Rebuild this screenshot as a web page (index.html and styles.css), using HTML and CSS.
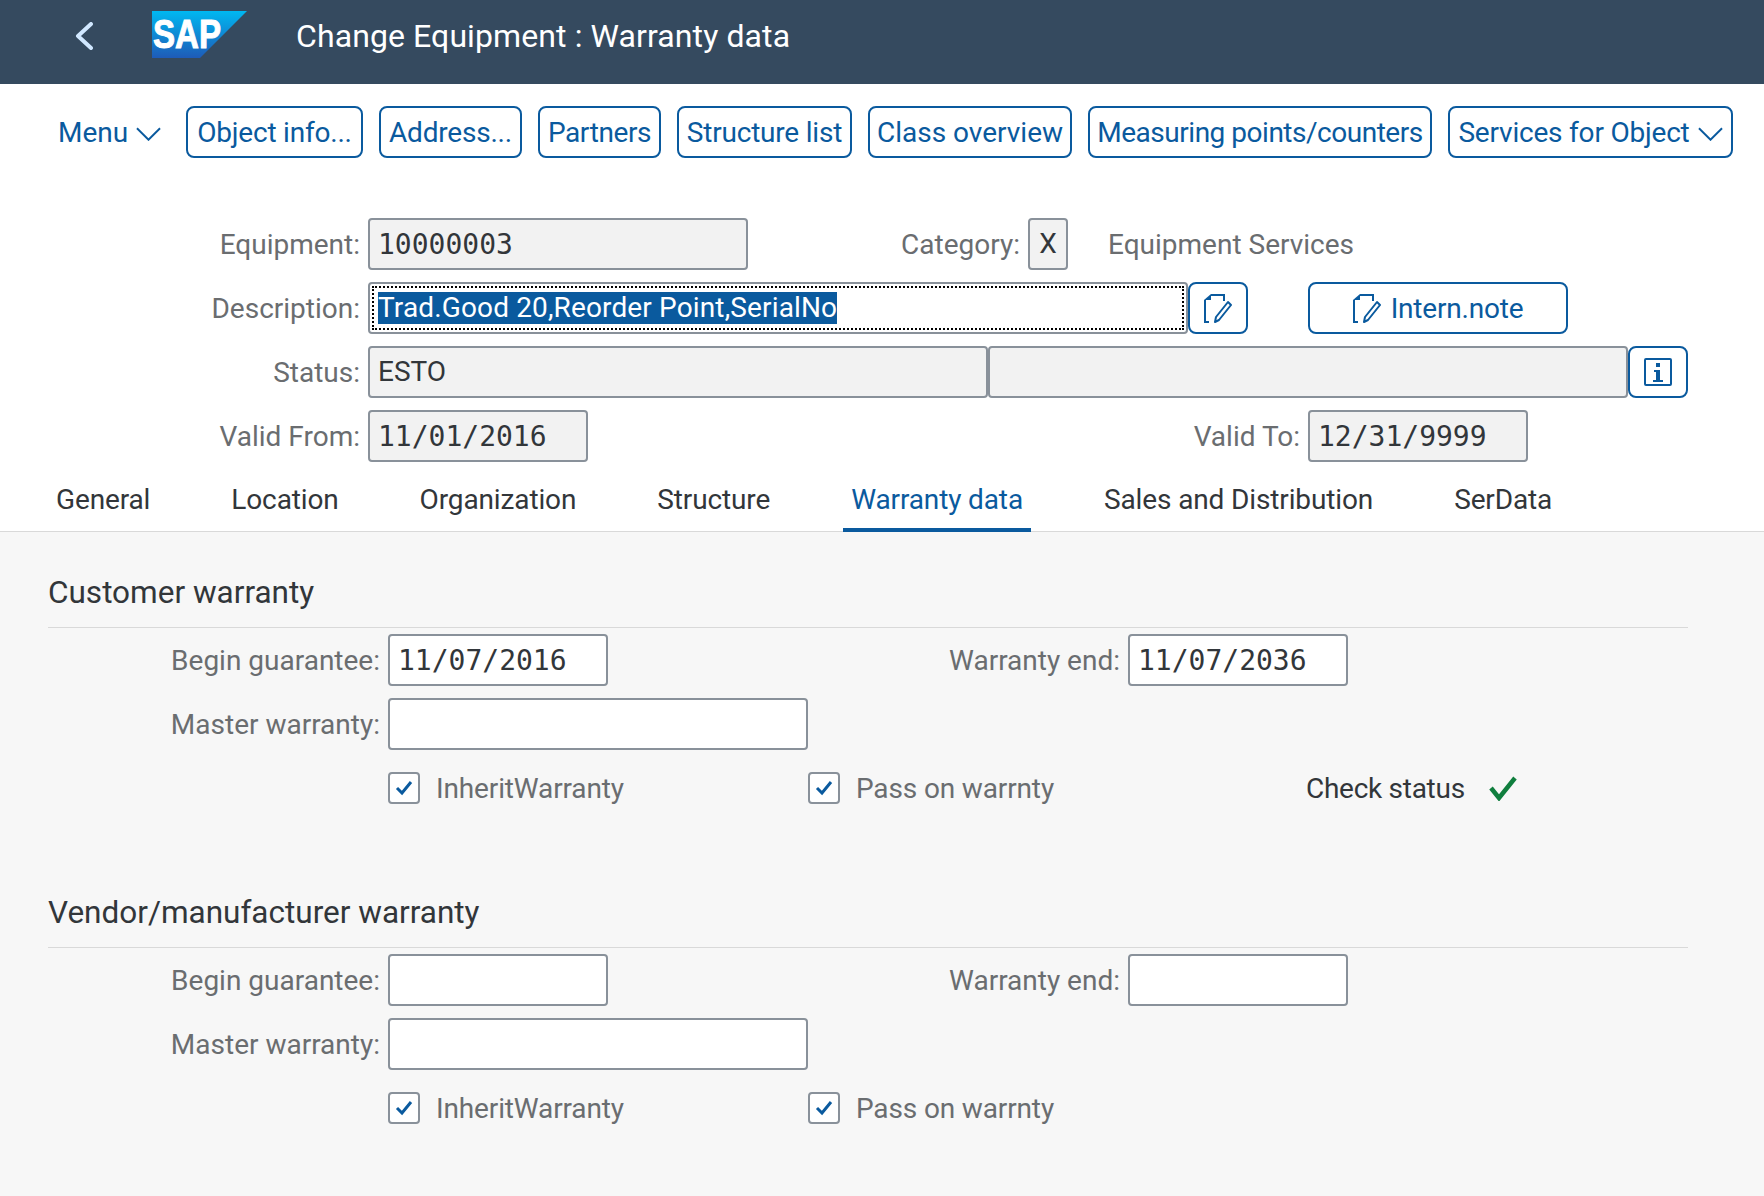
FILE: index.html
```html
<!DOCTYPE html>
<html lang="en">
    <head>
        <meta charset="UTF-8">
        <title>Change Equipment : Warranty data</title>
        <link rel="stylesheet" href="styles.css">
    </head>
    <body>
        <header class="shell">
            <svg class="back" viewBox="0 0 18 28"><path d="M16 2 3 14l13 12" fill="none" stroke="#d1e8ff" stroke-width="4" stroke-linecap="round" stroke-linejoin="round"/></svg>
            <svg class="logo" viewBox="0 0 95 47">
                <defs>
                    <linearGradient id="sapgrad" x1="0" y1="0" x2="0" y2="1">
                        <stop offset="0" stop-color="#00b8f1"/>
                        <stop offset="1" stop-color="#1e5bb8"/>
                    </linearGradient>
                </defs>
                <polygon points="0,0 95,0 48,47 0,47" fill="url(#sapgrad)"/>
                <text x="1" y="37" class="logo-text" textLength="68" lengthAdjust="spacingAndGlyphs">SAP</text>
            </svg>
            <div class="shell-title">Change Equipment : Warranty data</div>
        </header>

        <nav class="toolbar">
            <span class="menu">Menu <svg class="chev" viewBox="0 0 26 14"><path d="M1 1l12 12L25 1" fill="none" stroke="#0a5a9e" stroke-width="2"/></svg></span>
            <button class="btn w-obj">Object info...</button>
            <button class="btn w-addr">Address...</button>
            <button class="btn w-part">Partners</button>
            <button class="btn w-struct">Structure list</button>
            <button class="btn w-class">Class overview</button>
            <button class="btn w-meas">Measuring points/counters</button>
            <button class="btn w-serv">Services for Object <svg class="chev" viewBox="0 0 26 14"><path d="M1 1l12 12L25 1" fill="none" stroke="#0a5a9e" stroke-width="2"/></svg></button>
        </nav>

        <section class="head-form">
            <div class="row">
                <label class="lbl l-main">Equipment:</label>
                <div class="field ro mono f-equip">10000003</div>
                <label class="lbl l-cat">Category:</label>
                <div class="field ro f-x">X</div>
                <span class="lbl-text">Equipment Services</span>
            </div>
            <div class="row">
                <label class="lbl l-main">Description:</label>
                <div class="field focus f-desc"><span class="sel">Trad.Good 20,Reorder Point,SerialNo</span></div>
                <button class="btn icon-btn">
                    <svg class="edit" viewBox="0 0 28 29"><use href="#edit-icon"/></svg>
                </button>
                <button class="btn note-btn">
                    <svg class="edit" viewBox="0 0 28 29">
                        <g id="edit-icon">
                            <path d="M1 6v22h4M7 1h13v6" fill="none" stroke="#0a5a9e" stroke-width="2"/>
                            <path d="M0 6l7-6v6z" fill="#0a5a9e"/>
                            <path d="M12 23 24 8l3 3-12 15-4 2z" fill="none" stroke="#0a5a9e" stroke-width="2" stroke-linejoin="round"/>
                        </g>
                    </svg>
                    Intern.note
                </button>
            </div>
            <div class="row">
                <label class="lbl l-main">Status:</label>
                <div class="field ro f-stat1">ESTO</div>
                <div class="field ro f-stat2"></div>
                <button class="btn icon-btn">
                    <svg class="info" viewBox="0 0 28 28">
                        <rect x="1" y="1" width="26" height="26" rx="1" fill="none" stroke="#0a5a9e" stroke-width="2"/>
                        <rect x="12" y="5" width="4" height="4" fill="#0a5a9e"/>
                        <path d="M10 12h6v10h3v2H9v-2h3v-8h-2z" fill="#0a5a9e"/>
                    </svg>
                </button>
            </div>
            <div class="row">
                <label class="lbl l-main">Valid From:</label>
                <div class="field ro mono f-date">11/01/2016</div>
                <label class="lbl l-to">Valid To:</label>
                <div class="field ro mono f-date">12/31/9999</div>
            </div>
        </section>

        <div class="tabs">
            <a class="tab">General</a>
            <a class="tab">Location</a>
            <a class="tab">Organization</a>
            <a class="tab">Structure</a>
            <a class="tab active">Warranty data</a>
            <a class="tab">Sales and Distribution</a>
            <a class="tab">SerData</a>
        </div>

        <main class="content">
            <section class="group">
                <h2 class="group-title">Customer warranty</h2>
                <div class="row">
                    <label class="lbl l-sub">Begin guarantee:</label>
                    <div class="field mono f-date">11/07/2016</div>
                    <label class="lbl l-end">Warranty end:</label>
                    <div class="field mono f-date">11/07/2036</div>
                </div>
                <div class="row">
                    <label class="lbl l-sub">Master warranty:</label>
                    <div class="field f-master"></div>
                </div>
                <div class="row check-row">
                    <div class="check c-first">
                        <span class="box"><svg viewBox="0 0 18 16"><path d="M2 8l5 5L16 2" fill="none" stroke="#0a5a9e" stroke-width="3"/></svg></span>
                        InheritWarranty
                    </div>
                    <div class="check c-second">
                        <span class="box"><svg viewBox="0 0 18 16"><path d="M2 8l5 5L16 2" fill="none" stroke="#0a5a9e" stroke-width="3"/></svg></span>
                        Pass on warrnty
                    </div>
                    <div class="status">
                        Check status
                        <svg class="ok" viewBox="0 0 28 26"><path d="M2 13l8 10L26 3" fill="none" stroke="#107e3e" stroke-width="4.5"/></svg>
                    </div>
                </div>
            </section>

            <section class="group group-2">
                <h2 class="group-title">Vendor/manufacturer warranty</h2>
                <div class="row">
                    <label class="lbl l-sub">Begin guarantee:</label>
                    <div class="field mono f-date"></div>
                    <label class="lbl l-end">Warranty end:</label>
                    <div class="field mono f-date"></div>
                </div>
                <div class="row">
                    <label class="lbl l-sub">Master warranty:</label>
                    <div class="field f-master"></div>
                </div>
                <div class="row check-row">
                    <div class="check c-first">
                        <span class="box"><svg viewBox="0 0 18 16"><path d="M2 8l5 5L16 2" fill="none" stroke="#0a5a9e" stroke-width="3"/></svg></span>
                        InheritWarranty
                    </div>
                    <div class="check c-second">
                        <span class="box"><svg viewBox="0 0 18 16"><path d="M2 8l5 5L16 2" fill="none" stroke="#0a5a9e" stroke-width="3"/></svg></span>
                        Pass on warrnty
                    </div>
                </div>
            </section>
        </main>
    </body>
</html>
```

FILE: styles.css
```css
* {
    box-sizing: border-box;
}
html, body {
    height: 100%;
}
body {
    margin: 0;
    display: flex;
    flex-direction: column;
    background-color: #fff;
    color: #32363a;
    font-family: Roboto, "Noto Sans", sans-serif;
    font-size: 28px;
    overflow: hidden;
}

/* top bar */
.shell {
    flex: none;
    display: flex;
    align-items: center;
    height: 84px;
    padding: 0 0 12px 75px;
    background-color: #354a5f;
    color: #fff;
}
.back {
    width: 18px;
    height: 28px;
}
.logo {
    width: 95px;
    height: 47px;
    margin: 0 0 3px 59px;
}
.logo-text {
    font-family: "Liberation Sans", sans-serif;
    font-size: 40px;
    font-weight: bold;
    fill: #fff;
    stroke: #fff;
    stroke-width: 1px;
}
.shell-title {
    margin-left: 49px;
    font-size: 32px;
    letter-spacing: 0.1px;
}

/* buttons */
.toolbar {
    flex: none;
    display: flex;
    align-items: center;
    gap: 16px;
    height: 52px;
    margin-top: 22px;
    padding-left: 58px;
    color: #0a5a9e;
}
.menu {
    display: flex;
    align-items: center;
    gap: 8px;
    width: 112px;
}
.chev {
    width: 25px;
    height: 14px;
    margin-top: 4px;
}
.btn {
    display: flex;
    align-items: center;
    justify-content: center;
    gap: 10px;
    height: 52px;
    padding: 0;
    border: 2px solid #0a5a9e;
    border-radius: 8px;
    background-color: #fff;
    color: #0a5a9e;
    font: inherit;
    letter-spacing: -0.2px;
    white-space: nowrap;
}
.w-obj { width: 177px; }
.w-addr { width: 143px; }
.w-part { width: 123px; letter-spacing: -0.4px; }
.w-struct { width: 175px; }
.w-class { width: 204px; letter-spacing: 0; }
.w-meas { width: 344px; letter-spacing: -0.48px; }
.w-serv { width: 285px; gap: 8px; }

/* form rows */
.head-form {
    flex: none;
    margin-top: 60px;
}
.row {
    display: flex;
    align-items: center;
    height: 52px;
    margin-bottom: 12px;
}
.lbl {
    flex: none;
    margin-right: 8px;
    color: #6a6d70;
    text-align: right;
    white-space: nowrap;
}
.l-main { width: 360px; }
.l-cat { width: 264px; margin-left: 8px; }
.l-to { width: 712px; }
.l-sub { width: 380px; }
.l-end { width: 512px; }
.lbl-text {
    margin-left: 40px;
    color: #6a6d70;
}
.field {
    flex: none;
    height: 52px;
    padding: 0 8px;
    border: 2px solid #89919a;
    border-radius: 4px;
    background-color: #fff;
    line-height: 48px;
    white-space: nowrap;
}
.ro {
    background-color: #f2f2f2;
}
.mono {
    line-height: 50px;
    font-family: "DejaVu Sans Mono", monospace;
}
.f-equip { width: 380px; }
.f-x { width: 40px; text-align: center; padding: 0; }
.f-desc { width: 820px; }
.f-stat1 { width: 620px; }
.f-stat2 { width: 640px; }
.f-date { width: 220px; }
.f-master { width: 420px; }
.focus {
    position: relative;
    line-height: 48px;
}
.focus::after {
    content: "";
    position: absolute;
    top: 2px;
    right: 2px;
    bottom: 2px;
    left: 2px;
    border: 2px dotted #000;
}
.sel {
    display: inline-block;
    height: 32px;
    line-height: 32px;
    background-color: #0a5a9e;
    color: #fff;
    letter-spacing: 0.14px;
}
.icon-btn {
    width: 60px;
}
.note-btn {
    width: 260px;
    margin-left: 60px;
}
.edit {
    width: 28px;
    height: 29px;
}
.info {
    width: 28px;
    height: 28px;
}

/* tabs */
.tabs {
    flex: none;
    display: flex;
    gap: 65px;
    height: 58px;
    padding-left: 48px;
    border-bottom: 1px solid #d9d9d9;
    letter-spacing: -0.13px;
}
.tab {
    padding: 0 8px;
    line-height: 52px;
    height: 58px;
}
.tab.active {
    border-bottom: 4px solid #0a5a9e;
    color: #0a5a9e;
}

/* lower area */
.content {
    flex: 1;
    padding: 39px 76px 0 48px;
    background-color: #f7f7f7;
}
.group-title {
    margin: 0 0 6px;
    padding-bottom: 12px;
    border-bottom: 1px solid #d9d9d9;
    font-size: 31.5px;
    font-weight: normal;
    line-height: 44px;
}
.group .lbl.l-sub {
    width: 332px;
}
.group-2 {
    margin-top: 77px;
}
.check-row {
    height: 52px;
    color: #6a6d70;
}
.check {
    flex: none;
    display: flex;
    align-items: center;
    gap: 16px;
    letter-spacing: -0.14px;
}
.c-first {
    width: 420px;
    margin-left: 340px;
}
.c-second {
    width: 498px;
}
.box {
    display: flex;
    align-items: center;
    justify-content: center;
    width: 32px;
    height: 32px;
    border: 2px solid #89919a;
    border-radius: 4px;
    background-color: #fff;
}
.box svg {
    width: 18px;
    height: 16px;
}
.status {
    display: flex;
    align-items: center;
    gap: 24px;
    color: #32363a;
    letter-spacing: -0.28px;
}
.ok {
    width: 28px;
    height: 26px;
}
```
